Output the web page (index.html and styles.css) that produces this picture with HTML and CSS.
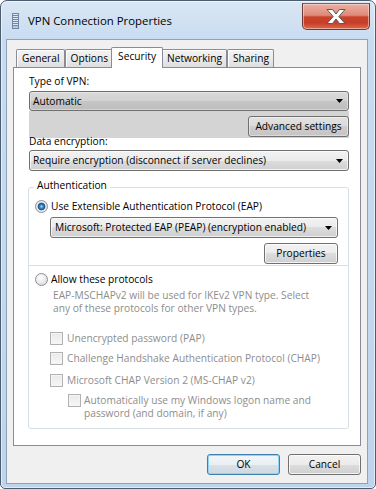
FILE: index.html
```html
<!DOCTYPE html>
<html lang="en">
<head>
<meta charset="utf-8">
<title>VPN Connection Properties</title>
<link rel="stylesheet" href="styles.css">
</head>
<body>
<div class="window">
  <div class="titlebar">
    <svg class="app-icon" width="7" height="16" viewBox="0 0 7 16">
      <rect x="0" y="0" width="7" height="16" fill="#6f88a8"/>
      <rect x="1" y="1" width="5" height="1" fill="#dfe8f2"/>
      <rect x="1" y="3" width="5" height="1" fill="#dfe8f2"/>
      <rect x="1" y="5" width="5" height="1" fill="#dfe8f2"/>
      <rect x="1" y="7" width="5" height="1" fill="#dfe8f2"/>
      <rect x="1" y="9" width="5" height="1" fill="#dfe8f2"/>
      <rect x="1" y="11" width="5" height="1" fill="#dfe8f2"/>
      <rect x="1" y="13" width="5" height="2" fill="#b8c8da"/>
    </svg>
    <span class="title">VPN Connection Properties</span>
    <div class="close-btn">
      <svg width="22" height="17" viewBox="0 0 22 17">
        <path d="M2 1.5 H7.5 L11 6 L14.5 1.5 H20 L13.8 8.5 L20 15.5 H14.5 L11 11 L7.5 15.5 H2 L8.2 8.5 Z" fill="#ffffff" stroke="#5a5a5a" stroke-width="1" stroke-linejoin="round"/>
      </svg>
    </div>
  </div>
  <div class="client">
    <div class="tabs">
      <div class="tab">General</div>
      <div class="tab">Options</div>
      <div class="tab active">Security</div>
      <div class="tab">Networking</div>
      <div class="tab">Sharing</div>
    </div>
    <div class="panel">
      <div class="label">Type of VPN:</div>
      <div class="combo combo-gray"><span>Automatic</span><svg class="arrow" width="7" height="4" viewBox="0 0 7 4"><path d="M0 0 H7 L3.5 4 Z" fill="#000"/></svg></div>
      <div class="adv-row"><div class="btn btn-adv">Advanced settings</div></div>
      <div class="label label-enc">Data encryption:</div>
      <div class="combo combo-enc"><span>Require encryption (disconnect if server declines)</span><svg class="arrow" width="7" height="4" viewBox="0 0 7 4"><path d="M0 0 H7 L3.5 4 Z" fill="#000"/></svg></div>
      <fieldset class="group">
        <legend class="legend">Authentication</legend>
        <div class="eap-section">
          <div class="radio-row"><span class="radio checked"></span><span>Use Extensible Authentication Protocol (EAP)</span></div>
          <div class="combo combo-eap"><span>Microsoft: Protected EAP (PEAP) (encryption enabled)</span><svg class="arrow" width="7" height="4" viewBox="0 0 7 4"><path d="M0 0 H7 L3.5 4 Z" fill="#000"/></svg></div>
          <div class="btn-row"><div class="btn btn-props">Properties</div></div>
        </div>
        <div class="proto-section">
          <div class="radio-row"><span class="radio"></span><span>Allow these protocols</span></div>
          <div class="note">EAP-MSCHAPv2 will be used for IKEv2 VPN type. Select<br>any of these protocols for other VPN types.</div>
          <div class="check-row row-pap"><span class="checkbox"></span><span>Unencrypted password (PAP)</span></div>
          <div class="check-row row-chap"><span class="checkbox"></span><span>Challenge Handshake Authentication Protocol (CHAP)</span></div>
          <div class="check-row row-ms"><span class="checkbox"></span><span>Microsoft CHAP Version 2 (MS-CHAP v2)</span></div>
          <div class="check-row row-auto"><span class="checkbox"></span><span>Automatically use my Windows logon name and<br>password (and domain, if any)</span></div>
        </div>
      </fieldset>
    </div>
    <div class="footer">
      <div class="btn btn-ok">OK</div>
      <div class="btn btn-cancel">Cancel</div>
    </div>
  </div>
</div>
</body>
</html>
```

FILE: styles.css
```css
* { box-sizing: border-box; }
html, body { margin: 0; padding: 0; background: #ffffff; }
body {
  width: 376px;
  height: 489px;
  overflow: hidden;
  font-family: "Open Sans", "Liberation Sans", sans-serif;
  font-size: 10.2px;
  line-height: 13px;
  color: #000000;
}

.window {
  width: 376px;
  height: 489px;
  border: 1px solid #4d5d70;
  border-radius: 7px 7px 5px 5px;
  background: linear-gradient(to bottom, #dae7f4 0, #c8dbf0 40px, #bfd4ec 100%);
  box-shadow: inset 0 0 0 1px rgba(255, 255, 255, 0.55);
  display: flex;
  flex-direction: column;
  padding: 0 7px 4px 5px;
}

.titlebar {
  height: 38px;
  margin: 0 -7px 0 -5px;
  padding: 0 5px 0 11px;
  display: flex;
  align-items: center;
}
.app-icon { flex: none; margin-top: 1px; }
.title {
  margin-left: 9px;
  font-size: 11.4px;
  color: #000;
  flex: 1;
}
.close-btn {
  align-self: flex-start;
  margin-top: 2px;
  width: 68px;
  height: 27px;
  border: 1px solid #6b3a33;
  border-top-color: #8a5a52;
  border-radius: 0 0 5px 5px;
  background: linear-gradient(to bottom, #eab0a3 0, #df8a78 45%, #c9432c 52%, #c63e27 75%, #dc6a4c 100%);
  box-shadow: inset 0 0 0 1px rgba(255, 225, 215, 0.55);
  display: flex;
  align-items: center;
  justify-content: center;
}

.client {
  flex: 1;
  background: #f0f0f0;
  border: 1px solid #8ea2b8;
  display: flex;
  flex-direction: column;
  padding: 7px 6px 8px 6px;
}

.tabs {
  height: 20px;
  display: flex;
  align-items: flex-end;
  padding-left: 3px;
}
.tab {
  height: 18px;
  padding: 2px 4px 0 5px;
  border: 1px solid #898c95;
  border-bottom: none;
  border-radius: 2px 2px 0 0;
  background: linear-gradient(to bottom, #f3f3f3 0, #ebebeb 50%, #dedede 100%);
  box-shadow: inset 1px 1px 0 #ffffff;
  white-space: nowrap;
}
.tab.active {
  position: relative;
  z-index: 1;
  height: 21px;
  margin: 0 -2px -1px;
  padding: 2px 6px 0 6px;
  background: #ffffff;
  box-shadow: none;
}

.panel {
  flex: 1;
  background: #ffffff;
  border: 1px solid #898c95;
  padding: 7px 11px 0 14px;
  display: flex;
  flex-direction: column;
}

.label { height: 13px; margin-left: 1px; }
.label-enc { margin-top: -3px; }

.combo {
  height: 21px;
  margin-left: 1px;
  border: 1px solid #707070;
  border-radius: 3px;
  background: linear-gradient(to bottom, #f2f2f2 0, #ebebeb 50%, #dddddd 50%, #cfcfcf 100%);
  box-shadow: inset 0 0 0 1px rgba(255, 255, 255, 0.7);
  display: flex;
  align-items: center;
  padding: 0 5px 0 3px;
  white-space: nowrap;
}
.combo span { flex: 1; }
.combo .arrow { flex: none; }
.combo-gray {
  height: 20px;
  margin-top: 3px;
  background: linear-gradient(to bottom, #d9d9d9 0, #d2d2d2 50%, #c6c6c6 50%, #bdbdbd 100%);
  box-shadow: inset 0 0 0 1px rgba(255, 255, 255, 0.35);
}
.combo-enc { margin-top: 2px; }

.adv-row {
  margin-left: 1px;
  background: #d4d4d4;
  padding: 5px 0 1px;
  display: flex;
  justify-content: flex-end;
}

.btn {
  height: 21px;
  border: 1px solid #707070;
  border-radius: 3px;
  background: linear-gradient(to bottom, #f2f2f2 0, #ebebeb 50%, #dddddd 50%, #cfcfcf 100%);
  box-shadow: inset 0 0 0 1px rgba(255, 255, 255, 0.75);
  display: flex;
  align-items: center;
  justify-content: center;
  white-space: nowrap;
}
.btn-adv {
  width: 101px;
  background: linear-gradient(to bottom, #e2e2e2 0, #dadada 50%, #cdcdcd 50%, #c4c4c4 100%);
  box-shadow: inset 0 0 0 1px rgba(255, 255, 255, 0.4);
}

.group {
  margin: 8px 0 0 0;
  padding: 0 0 8px 0;
  border: 1px solid #d5dfe5;
  border-radius: 3px;
  min-width: 0;
}
.legend {
  margin-left: 5px;
  padding: 0 3px 4px 3px;
  line-height: 13px;
}

.eap-section {
  padding: 4px 10px 1px 6px;
}
.radio-row {
  display: flex;
  align-items: center;
  height: 13px;
  white-space: nowrap;
}
.radio-row .radio { margin-right: 3px; }
.radio {
  flex: none;
  width: 13px;
  height: 13px;
  border-radius: 50%;
  border: 1px solid #8c8f95;
  background: radial-gradient(circle at 40% 35%, #ffffff 0, #ececec 45%, #cfcfcf 100%);
}
.radio.checked {
  background: radial-gradient(circle at 50% 50%, #a9dcf8 0, #3d8fd6 1.6px, #1b4f86 3.4px, #e4e4e4 4.2px, #f6f6f6 100%);
}
.combo-eap { margin: 4px 0 0 15px; padding-left: 4px; }
.btn-row { display: flex; justify-content: flex-end; margin-top: 5px; }
.btn-props { width: 74px; }

.proto-section {
  border-top: 1px solid #d5dfe5;
  padding: 7px 10px 0 6px;
}
.note {
  margin: 3px 0 0 18px;
  color: #8d8d8d;
  white-space: nowrap;
}
.check-row {
  display: flex;
  align-items: flex-start;
  color: #8d8d8d;
  margin-left: 15px;
  white-space: nowrap;
}
.check-row .checkbox { margin-right: 4px; }
.checkbox {
  flex: none;
  width: 13px;
  height: 13px;
  border: 1px solid #b1b1b1;
  background: linear-gradient(to bottom, #e9e9e9, #f7f7f7);
  box-shadow: inset 0 0 0 1px #f4f4f4;
}
.row-pap { margin-top: 17px; }
.row-chap { margin-top: 7px; }
.row-ms { margin-top: 9px; }
.row-auto { margin-top: 7px; margin-left: 33px; }
.row-auto .checkbox { margin-right: 3px; }

.footer {
  display: flex;
  justify-content: flex-end;
  gap: 8px;
  margin-top: 8px;
}
.btn-ok, .btn-cancel { width: 73px; }
.btn-ok {
  border-color: #3c7fb1;
  box-shadow: inset 0 0 0 1px #8fd6f6;
  background: linear-gradient(to bottom, #f2f6f9 0, #eaeff3 50%, #dae2e8 50%, #cfd8df 100%);
}
```
